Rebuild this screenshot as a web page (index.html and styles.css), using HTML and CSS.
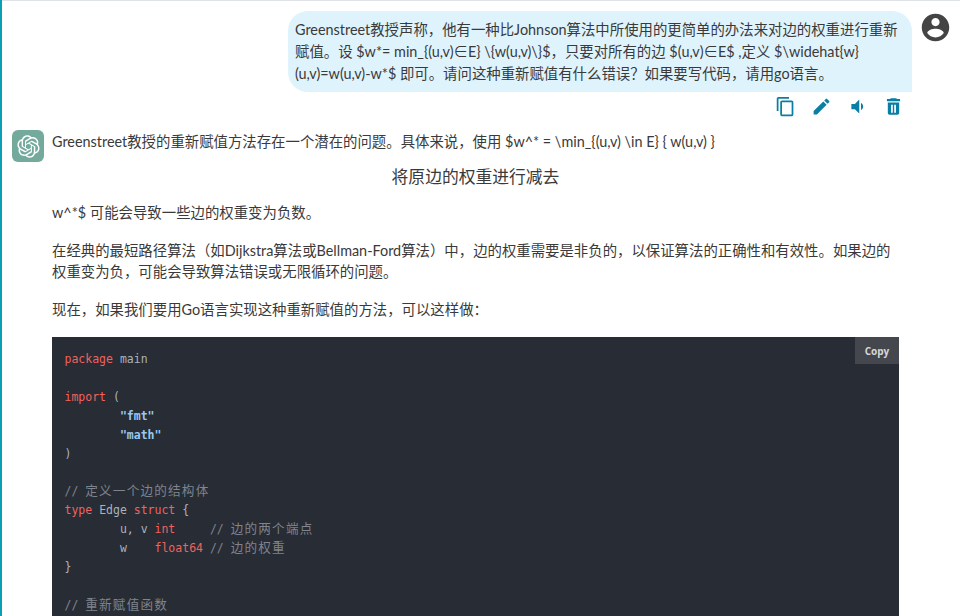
FILE: index.html
```html
<!DOCTYPE html>
<html lang="zh">
<head>
<meta charset="utf-8">
<title>Chat</title>
<link rel="stylesheet" href="styles.css">
</head>
<body>
<main class="chat">
  <section class="user-row">
    <div class="user-col">
      <div class="bubble">Greenstreet教授声称，他有一种比Johnson算法中所使用的更简单的办法来对边的权重进行重新赋值。设 $w*= min_{(u,v)∈E} \{w(u,v)\}$，只要对所有的边 $(u,v)∈E$ ,定义 $\widehat{w}(u,v)=w(u,v)-w*$ 即可。请问这种重新赋值有什么错误？如果要写代码，请用go语言。</div>
      <div class="actions">
        <svg class="icon" viewBox="0 0 24 24"><path d="M16 1H4c-1.1 0-2 .9-2 2v14h2V3h12V1zm3 4H8c-1.1 0-2 .9-2 2v14c0 1.1.9 2 2 2h11c1.1 0 2-.9 2-2V7c0-1.1-.9-2-2-2zm0 16H8V7h11v14z"/></svg>
        <svg class="icon" viewBox="0 0 24 24"><path d="M3 17.25V21h3.75L17.81 9.94l-3.75-3.75L3 17.25zM20.71 7.04a.996.996 0 0 0 0-1.41l-2.34-2.34a.996.996 0 0 0-1.41 0l-1.83 1.83 3.75 3.75 1.83-1.83z"/></svg>
        <svg class="icon" viewBox="0 0 24 24"><path d="M18.5 12c0-1.77-1.02-3.29-2.5-4.03v8.05c1.48-.73 2.5-2.25 2.5-4.02zM5 9v6h4l5 5V4L9 9H5z"/></svg>
        <svg class="icon" viewBox="0 0 24 24"><path d="M9 2.500l-1 1H4.500V6h15V3.500H16l-1-1H9zM5.500 7.500V19.500c0 1.100.9 2 2 2h9c1.100 0 2-.9 2-2V7.500H5.500zM9.200 10h2v9h-2v-9zM12.800 10h2v9h-2v-9z"/></svg>
      </div>
    </div>
    <svg class="avatar" viewBox="0 0 24 24"><path d="M12 2C6.48 2 2 6.48 2 12s4.48 10 10 10 10-4.48 10-10S17.52 2 12 2zm0 3c1.66 0 3 1.34 3 3s-1.34 3-3 3-3-1.34-3-3 1.34-3 3-3zm0 14.2c-2.5 0-4.71-1.28-6-3.22.03-1.99 4-3.08 6-3.08 1.99 0 5.97 1.09 6 3.08-1.29 1.94-3.5 3.22-6 3.22z"/></svg>
  </section>
  <section class="bot-row">
    <div class="logo">
      <svg viewBox="0 0 41 41"><path d="M37.5324 16.8707C37.9808 15.5241 38.1363 14.0974 37.9886 12.6859C37.8409 11.2744 37.3934 9.91076 36.676 8.68622C35.6126 6.83404 33.9882 5.3676 32.0373 4.4985C30.0864 3.62941 27.9098 3.40259 25.8215 3.85078C24.8796 2.7893 23.7219 1.94125 22.4257 1.36341C21.1295 0.785575 19.7249 0.491269 18.3058 0.500197C16.1708 0.495044 14.0893 1.16803 12.3614 2.42214C10.6335 3.67624 9.34853 5.44666 8.6917 7.47815C7.30085 7.76286 5.98686 8.3414 4.8377 9.17505C3.68854 10.0087 2.73073 11.0782 2.02839 12.312C0.956464 14.1591 0.498905 16.2988 0.721698 18.4228C0.944492 20.5467 1.83612 22.5449 3.268 24.1293C2.81966 25.4759 2.66413 26.9026 2.81182 28.3141C2.95951 29.7256 3.40701 31.0892 4.12437 32.3138C5.18791 34.1659 6.8123 35.6322 8.76321 36.5013C10.7141 37.3704 12.8907 37.5973 14.9789 37.1492C15.9208 38.2107 17.0786 39.0587 18.3747 39.6366C19.6709 40.2144 21.0755 40.5087 22.4946 40.4998C24.6307 40.5054 26.7133 39.8321 28.4418 38.5772C30.1704 37.3223 31.4556 35.5506 32.1119 33.5179C33.5027 33.2332 34.8167 32.6547 35.9659 31.821C37.115 30.9874 38.0728 29.9178 38.7752 28.684C39.8458 26.8371 40.3023 24.6979 40.0789 22.5748C39.8556 20.4517 38.9639 18.4544 37.5324 16.8707ZM22.4978 37.8849C20.7443 37.8874 19.0459 37.2733 17.6994 36.1501C17.7601 36.117 17.8666 36.0586 17.936 36.0161L25.9004 31.4156C26.1003 31.3019 26.2663 31.137 26.3813 30.9378C26.4964 30.7386 26.5563 30.5124 26.5549 30.2825V19.0542L29.9213 20.998C29.9389 21.0068 29.9541 21.0198 29.9656 21.0359C29.977 21.052 29.9842 21.0707 29.9867 21.0902V30.3889C29.9842 32.375 29.1946 34.2791 27.7909 35.6841C26.3872 37.0892 24.4838 37.8806 22.4978 37.8849ZM6.39227 31.0064C5.51397 29.4888 5.19742 27.7107 5.49804 25.9832C5.55718 26.0187 5.66048 26.0818 5.73461 26.1244L13.699 30.7248C13.8975 30.8408 14.1233 30.902 14.3532 30.902C14.583 30.902 14.8088 30.8408 15.0073 30.7248L24.731 25.1103V28.9979C24.7321 29.0177 24.7283 29.0376 24.7199 29.0556C24.7115 29.0736 24.6988 29.0893 24.6829 29.1012L16.6317 33.7497C14.9096 34.7416 12.8643 35.0097 10.9447 34.4954C9.02506 33.9811 7.38785 32.7263 6.39227 31.0064ZM4.29707 13.6194C5.17156 12.0998 6.55279 10.9364 8.19885 10.3327C8.19885 10.4013 8.19491 10.5228 8.19491 10.6071V19.808C8.19351 20.0378 8.25334 20.2638 8.36823 20.4629C8.48312 20.6619 8.64893 20.8267 8.84863 20.9404L18.5723 26.5542L15.206 28.4979C15.1894 28.5089 15.1703 28.5155 15.1505 28.5173C15.1307 28.5191 15.1107 28.516 15.0924 28.5082L7.04046 23.8557C5.32135 22.8601 4.06716 21.2235 3.55289 19.3046C3.03862 17.3858 3.30624 15.3413 4.29707 13.6194ZM31.955 20.0556L22.2312 14.4411L25.5976 12.4981C25.6142 12.4872 25.6333 12.4805 25.6531 12.4787C25.6729 12.4769 25.6928 12.4801 25.7111 12.4879L33.7631 17.1364C34.9967 17.849 36.0017 18.8982 36.6606 20.1613C37.3194 21.4244 37.6047 22.849 37.4832 24.2684C37.3617 25.6878 36.8382 27.0432 35.9743 28.1759C35.1103 29.3086 33.9415 30.1717 32.6047 30.6641C32.6047 30.5947 32.6047 30.4733 32.6047 30.3889V21.188C32.6066 20.9586 32.5474 20.7328 32.4332 20.5338C32.319 20.3348 32.154 20.1698 31.955 20.0556ZM35.3055 15.0128C35.2464 14.9765 35.1431 14.9142 35.069 14.8717L27.1045 10.2712C26.906 10.1554 26.6803 10.0943 26.4504 10.0943C26.2206 10.0943 25.9948 10.1554 25.7963 10.2712L16.0726 15.8858V11.9982C16.0715 11.9783 16.0753 11.9585 16.0837 11.9405C16.0921 11.9225 16.1048 11.9068 16.1207 11.8949L24.1719 7.25025C25.4053 6.53903 26.8158 6.19376 28.2383 6.25482C29.6608 6.31589 31.0364 6.78077 32.2044 7.59508C33.3723 8.40939 34.2842 9.53945 34.8334 10.8531C35.3826 12.1667 35.5464 13.6095 35.3055 15.0128ZM14.2424 21.9419L10.8752 19.9981C10.8576 19.9893 10.8423 19.9763 10.8309 19.9602C10.8195 19.9441 10.8122 19.9254 10.8098 19.9058V10.6071C10.8107 9.18295 11.2173 7.78848 11.9819 6.58696C12.7466 5.38544 13.8377 4.42659 15.1275 3.82264C16.4173 3.21869 17.8524 2.99464 19.2649 3.1767C20.6775 3.35876 22.0089 3.93941 23.1034 4.85067C23.0427 4.88379 22.937 4.94215 22.8668 4.98473L14.9024 9.58517C14.7025 9.69878 14.5366 9.86356 14.4215 10.0626C14.3065 10.2616 14.2466 10.4877 14.2479 10.7175L14.2424 21.9419ZM16.071 17.9991L20.4018 15.4978L24.7325 17.9975V22.9985L20.4018 25.4983L16.071 22.9985V17.9991Z"/></svg>
    </div>
    <div class="answer">
      <p class="first">Greenstreet教授的重新赋值方法存在一个潜在的问题。具体来说，使用 $w^* = \min_{(u,v) \in E} { w(u,v) }</p>
      <div class="display">将原边的权重进行减去</div>
      <p class="after">w^*$ 可能会导致一些边的权重变为负数。</p>
      <p>在经典的最短路径算法（如Dijkstra算法或Bellman-Ford算法）中，边的权重需要是非负的，以保证算法的正确性和有效性。如果边的权重变为负，可能会导致算法错误或无限循环的问题。</p>
      <p>现在，如果我们要用Go语言实现这种重新赋值的方法，可以这样做：</p>
      <div class="code-box">
        <button class="copy">Copy</button>
<pre class="code"><span class="k">package</span> main

<span class="k">import</span> (
	<span class="s">"fmt"</span>
	<span class="s">"math"</span>
)

<span class="c">// <span class="zh">定义一个边的结构体</span></span>
<span class="k">type</span> Edge <span class="k">struct</span> {
	u, v <span class="k">int</span>     <span class="c">// <span class="zh">边的两个端点</span></span>
	w    <span class="k">float64</span> <span class="c">// <span class="zh">边的权重</span></span>
}

<span class="c">// <span class="zh">重新赋值函数</span></span>
</pre>
      </div>
    </div>
  </section>
</main>
</body>
</html>
```
FILE: styles.css
```css
* { box-sizing: border-box; }
html, body { margin: 0; height: 100%; overflow: hidden; background: #fff; }
body { font-family: Lato, "Noto Sans CJK SC", sans-serif; font-size: 14.4px; color: #3a3a3a; }
.chat {
  height: 616px;
  overflow: hidden;
  border-left: 2px solid #0b9eb5;
  padding-left: 10px;
}
.user-row {
  display: flex; justify-content: flex-end; align-items: flex-start;
  margin-left: -10px; padding-top: 10px; border-top: 1px solid #dfe2e8;
}
.user-col { width: 624px; display: flex; flex-direction: column; }
.bubble {
  background: #dff3fd;
  border-radius: 20px 20px 0 20px;
  padding: 8px 7px;
  line-height: 22px;
  height: 81px;
}
.actions { display: flex; gap: 15px; justify-content: flex-end; padding: 4px 8px 0 0; height: 38px; }
.icon { width: 21px; height: 21px; fill: #0a7ea4; flex: none; }
.avatar { width: 33px; height: 33px; fill: #444; margin: 0 8px 0 7px; flex: none; }
.bot-row { display: flex; align-items: flex-start; gap: 8px; }
.logo {
  width: 32px; height: 32px; border-radius: 6px; background: #74aa9c;
  display: flex; align-items: center; justify-content: center; flex: none;
}
.logo svg { width: 23px; height: 23px; fill: #fff; }
.answer { width: 847px; padding-top: 1px; }
.answer p { margin: 0 0 17px; line-height: 21px; }
.answer p.first { margin: 0; }
.display { font-size: 16.8px; text-align: center; line-height: 24px; margin: 13px 0 13px; }
.code-box { position: relative; background: #282c34; }
.copy {
  position: absolute; top: 0; right: 0; border: 0; width: 44px; height: 27px;
  background: #44474e; color: #d8d8d8; font: 700 10px "Open Sans", sans-serif;
}
.code {
  margin: 0; padding: 13px 12px 0 12.5px;
  font: 11.5px/18.9px "DejaVu Sans Mono", "Noto Sans CJK SC", monospace;
  color: #abb2bf; tab-size: 8; height: 300px;
}
.k { color: #f0635f; }
.s { color: #98c8f0; font-weight: 700; }
.c { color: #7f848e; }
.zh { font-size: 12.6px; letter-spacing: 1.2px; }
```
